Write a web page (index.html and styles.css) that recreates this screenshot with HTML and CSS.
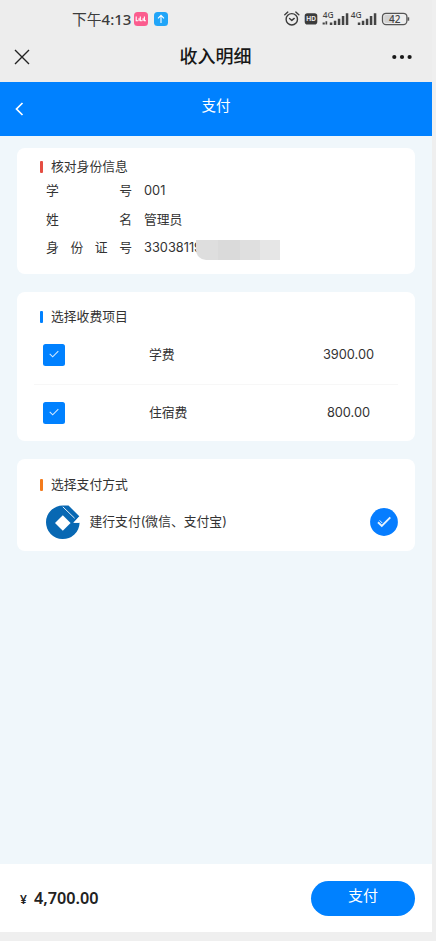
FILE: index.html
```html
<!DOCTYPE html>
<html lang="zh-CN">
<head>
<meta charset="utf-8">
<meta name="viewport" content="width=device-width, initial-scale=1">
<title>收入明细</title>
<link rel="stylesheet" href="styles.css">
</head>
<body>
<div class="phone">
  <header class="top">
    <div class="status">
      <span class="clock">下午<span class="clock-num">4:13</span></span>
      <svg class="app-pink" width="14" height="14" viewBox="0 0 14 14"><rect width="14" height="14" rx="3.5" fill="#fb5c8e"/><path d="M2.2 4.5v4.3h2M5 6.2v2.6M6.3 4.5v4.3h2M9.1 6.2v2.6M10.4 4.5v4.3h1.6" fill="none" stroke="#fff" stroke-width="1.1"/></svg>
      <svg class="app-blue" width="14" height="14" viewBox="0 0 14 14"><rect width="14" height="14" rx="3.5" fill="#21a5f8"/><path d="M7 11V3.5M4 6.3l3-3 3 3" fill="none" stroke="#fff" stroke-width="1.1"/></svg>
      <svg class="indicators" width="126" height="18" viewBox="284 10 126 18">
        <g fill="none" stroke="#3c3c3c" stroke-width="1.4" stroke-linecap="round" stroke-linejoin="round">
          <circle cx="291.8" cy="19.3" r="5.7"/>
          <path d="M284.8 14.8l3-2.7M298.8 14.8l-3-2.7M289.6 18.4l2.2 2 2.4-2"/>
        </g>
        <rect x="304.7" y="13.3" width="12.6" height="11.2" rx="2.8" fill="#3c3c3c"/>
        <text x="306.3" y="21.3" class="hd">HD</text>
        <text x="322.8" y="17.5" class="net">4G</text>
        <text x="350.8" y="17.5" class="net">4G</text>
        <path d="M322.6 22.6h2.2v2h-2.2zM325.5 21.2h1.7v3.2h-1.7zM329.8 22.6h2.5v2.4h-2.5zM333.8 20.8h2.5V25h-2.5zM337.8 18.7h2.5V25h-2.5zM341.8 16h2.5v9h-2.5zM345.8 13.2h2.5V25h-2.5zM357.8 22.6h2.5v2.4h-2.5zM361.8 20.8h2.5V25h-2.5zM365.8 18.7h2.5V25h-2.5zM369.8 16h2.5v9h-2.5zM373.8 13.2h2.5V25h-2.5z" fill="#444"/>
        <rect x="384.2" y="14.8" width="9.4" height="8.3" rx="2" fill="#d2d2d2"/>
        <rect x="382.5" y="13.3" width="24.4" height="11.3" rx="3.5" fill="none" stroke="#555" stroke-width="1.3"/>
        <path d="M408.4 17.3v3.4" stroke="#555" stroke-width="1.6"/>
        <text x="389" y="22.5" class="battery">42</text>
      </svg>
    </div>
    <div class="titlebar">
      <svg width="16" height="16" viewBox="0 0 16 16"><path d="M1 1l14 14M15 1L1 15" fill="none" stroke="#222" stroke-width="1.4"/></svg>
      <h1>收入明细</h1>
      <svg width="20" height="6" viewBox="0 0 20 6" fill="#181818"><circle cx="2.3" cy="3" r="2.1"/><circle cx="10" cy="3" r="2.1"/><circle cx="17.6" cy="3" r="2.1"/></svg>
    </div>
  </header>
  <nav class="nav">
    <svg width="9" height="14" viewBox="0 0 9 14"><path d="M7.5 1L1.5 7l6 6" fill="none" stroke="#fff" stroke-width="1.7"/></svg>
    <span>支付</span>
  </nav>
  <main class="content">
    <section class="card identity">
      <h2 class="red">核对身份信息</h2>
      <dl>
        <dt><span>学</span><span>号</span></dt><dd>001</dd>
        <dt><span>姓</span><span>名</span></dt><dd>管理员</dd>
        <dt><span>身</span><span>份</span><span>证</span><span>号</span></dt><dd class="id-number">33038119<span class="mask"></span></dd>
      </dl>
    </section>
    <section class="card fees">
      <h2 class="blue">选择收费项目</h2>
      <div class="fee">
        <span class="check"><svg width="10" height="8" viewBox="0 0 10 8"><path d="M.7 3.8l3 3L9.3 1.2" fill="none" stroke="#cfe8ff" stroke-width="1.1"/></svg></span>
        <span class="name">学费</span><span class="price">3900.00</span>
      </div>
      <div class="fee">
        <span class="check"><svg width="10" height="8" viewBox="0 0 10 8"><path d="M.7 3.8l3 3L9.3 1.2" fill="none" stroke="#cfe8ff" stroke-width="1.1"/></svg></span>
        <span class="name">住宿费</span><span class="price">800.00</span>
      </div>
    </section>
    <section class="card methods">
      <h2 class="orange">选择支付方式</h2>
      <div class="method">
        <svg width="34" height="35" viewBox="0 0 34 35"><path d="M17 .5H22.5L33.3 11.2 27.6 17.8H33.6A16.8 16.8 0 1 1 17 .5Z" fill="#0868b3"/><path d="M16.8 1.8L28.6 13.2" stroke="#fff" stroke-width=".9"/><path d="M27.2 17.8L33.3 11.8V17.8Z" fill="#fff"/><path d="M16.8 10.2l7.8 7.8-7.8 7.8L9 18z" fill="#fff"/></svg>
        <span class="method-name">建行支付(微信、支付宝)</span>
        <svg width="28" height="28" viewBox="0 0 28 28"><circle cx="14" cy="14" r="13.9" fill="#067dff"/><path d="M8 14.2l3.8 3.7L20.3 9.3" fill="none" stroke="#e5f2ff" stroke-width="1.9"/><path d="M9.6 12.3l2.6 2.7" fill="none" stroke="#e5f2ff" stroke-width="1"/></svg>
      </div>
    </section>
  </main>
  <footer class="footer">
    <span class="total"><span class="yen">¥</span>4,700.00</span>
    <button class="pay" type="button">支付</button>
  </footer>
</div>
</body>
</html>
```
FILE: styles.css
```css
* { box-sizing: border-box; margin: 0; padding: 0; }
body {
  background: #efefef;
  color: #333;
  font: 12.8px/20px Inter, "Noto Sans CJK SC", sans-serif;
}
svg { display: block; flex: none; }
.phone { width: 432px; height: 932px; display: flex; flex-direction: column; background: #f0f7fb; }
.top { height: 82px; background: #ededed; }
.status { height: 36px; display: flex; align-items: center; padding: 2px 22px 0 72px; color: #3c3c3c; }
.clock { width: 62px; font-size: 14.8px; white-space: nowrap; }
.clock-num { font-family: "Noto Sans", sans-serif; font-size: 15px; font-weight: 500; }
.app-blue { margin-left: 6px; }
.indicators { margin-left: auto; }
.hd { font: bold 6.5px Inter, sans-serif; fill: #eee; }
.net { font: 500 8.3px "Noto Sans", sans-serif; fill: #444; }
.battery { font: 500 10px "Noto Sans", sans-serif; fill: #444; }
.titlebar { height: 41px; display: grid; grid-template-columns: 20px 1fr 20px; align-items: center; padding: 0 20px 0 14px; }
.titlebar h1 { font-size: 18px; font-weight: 500; line-height: 26px; text-align: center; padding: 1px 0 0 5px; color: #181818; }
.nav { height: 54px; display: grid; grid-template-columns: 15px 1fr 15px; align-items: center; padding: 0 15px; background: #0081ff; color: #fff; }
.nav svg { margin-left: -.5px; }
.nav span { text-align: center; font-size: 14.5px; line-height: 20px; padding-bottom: 7px; }
.content { flex: 1; display: flex; flex-direction: column; gap: 17.5px; padding: 11.5px 17px 0; }
.card { background: #fff; border-radius: 8px; }
h2 { display: flex; align-items: center; gap: 8px; padding-left: 23px; font-size: 12.8px; font-weight: 400; line-height: 20px; }
h2::before { content: ""; width: 3px; height: 12px; border-radius: 1px; }
.red::before { background: #e54d42; }
.blue::before { background: #0081ff; }
.orange::before { background: #f37b1d; }
.identity { height: 126.5px; padding-top: 9.5px; }
dl { display: grid; grid-template-columns: 86px 1fr; column-gap: 12px; grid-auto-rows: 28.8px; margin: -.5px 29px 0; align-items: center; }
dt { display: flex; justify-content: space-between; }
.id-number { display: flex; width: 136px; }
.mask { position: relative; flex: none; width: 84px; height: 20px; margin: 2px 0 -2px -6px; border-radius: 0 0 0 10px; background: linear-gradient(90deg, #dedede 0 22px, #dadada 22px 44px, #dfdfdf 44px 64px, #e6e6e6 64px); }
.fees { height: 149.5px; padding-top: 15.5px; }
.fee { height: 57.5px; display: grid; grid-template-columns: 115px 1fr 99px; align-items: center; margin: 0 17px; }
.fees h2 { margin-bottom: -1px; }
.fee + .fee { border-top: 1px solid #f7f7f7; }
.check { width: 22px; height: 22px; margin-left: 9px; display: grid; place-items: center; border-radius: 2.5px; background: #0081ff; }
.check svg { margin-top: -2px; }
.price { text-align: center; }
.methods { height: 92.5px; padding-top: 16px; }
.method { display: flex; align-items: center; height: 55px; padding: 0 17px 0 28.5px; }
.method-name { flex: 1; margin-left: 10px; }
.footer { height: 68px; display: flex; align-items: center; justify-content: space-between; padding: 1px 17px 0 20px; background: #fff; color: #222; }
.total { font: 600 16.2px/20px "Noto Sans", sans-serif; }
.yen { font-size: 12px; margin-right: 7px; }
.pay { width: 104px; height: 35px; border: 0; border-radius: 18px; background: #0081ff; color: #fff; font: 15px/20px "Noto Sans CJK SC", sans-serif; padding-bottom: 8px; }
```
